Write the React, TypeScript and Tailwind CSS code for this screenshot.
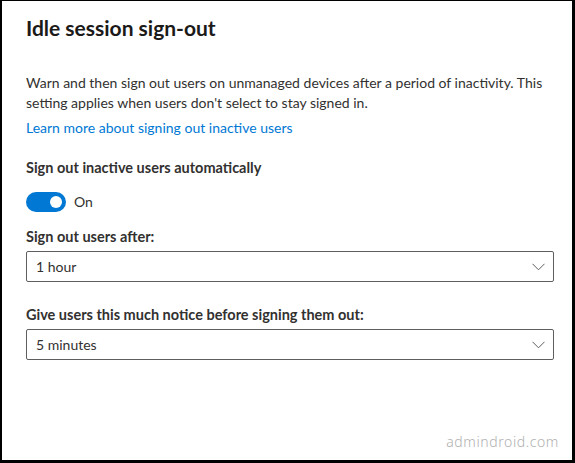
import React from "react";

function Chevron() {
  return (
    <svg width="13" height="8" viewBox="0 0 13 8" fill="none">
      <path d="M0.5 0.8 L6.5 6.8 L12.5 0.8" stroke="#605e5c" strokeWidth="1" />
    </svg>
  );
}

function Dropdown({ value }: { value: string }) {
  return (
    <div className="mt-[4px] flex h-[31px] w-[528px] items-center justify-between border border-[#605e5c] rounded-[2px] pl-[9px] pr-[8px] text-[14px] text-[#323130]">
      <span>{value}</span>
      <Chevron />
    </div>
  );
}

export default function App() {
  return (
    <div
      className="flex h-[463px] w-[575px] flex-col border-t-[1px] border-l-[2px] border-r-[3px] border-b-[3px] border-black bg-white pl-[24px] pt-[13px] text-[#323130]"
      style={{ fontFamily: 'Lato, "Noto Sans", sans-serif' }}
    >
      <h1 className="text-[21px] font-bold leading-[28px] text-[#1b1a19]">Idle session sign-out</h1>
      <p className="mt-[31px] text-[14px] leading-[20px] whitespace-nowrap">
        Warn and then sign out users on unmanaged devices after a period of inactivity. This
        <br />
        setting applies when users don't select to stay signed in.
      </p>
      <a className="mt-[5px] text-[14px] leading-[20px] text-[#0078d4]" href="#">
        Learn more about signing out inactive users
      </a>
      <div className="mt-[20px] text-[14.5px] font-bold leading-[20px]">Sign out inactive users automatically</div>
      <div className="mt-[14px] flex items-center gap-[8px]">
        <div className="flex h-[20px] w-[40px] items-center justify-end rounded-full bg-[#0078d4] pr-[4px]">
          <div className="h-[12px] w-[12px] rounded-full bg-white" />
        </div>
        <span className="text-[14px] leading-[20px]">On</span>
      </div>
      <div className="mt-[15px] text-[14.5px] font-bold leading-[20px]">Sign out users after:</div>
      <Dropdown value="1 hour" />
      <div className="mt-[23px] text-[14.5px] font-bold leading-[20px]">Give users this much notice before signing them out:</div>
      <Dropdown value="5 minutes" />
      <div className="mt-auto mb-[8px] mr-[13px] self-end text-[14px] tracking-[0.6px] text-[#b0b0b0]" style={{ fontFamily: '"Noto Sans", sans-serif', fontWeight: 300 }}>
        admindroid.com
      </div>
    </div>
  );
}
